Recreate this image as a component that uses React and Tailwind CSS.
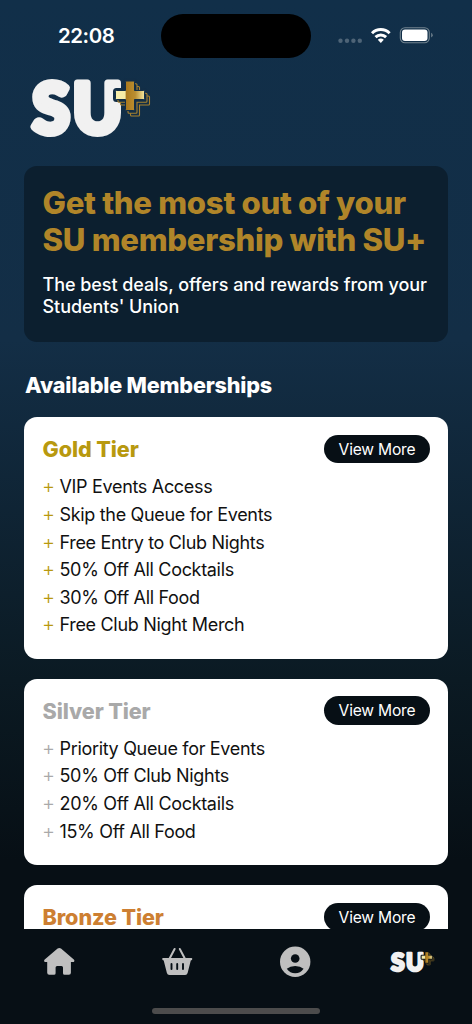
import React from "react";

const tiers = [
  {
    name: "Gold Tier",
    color: "text-[#b8990f]",
    perks: [
      "VIP Events Access",
      "Skip the Queue for Events",
      "Free Entry to Club Nights",
      "50% Off All Cocktails",
      "30% Off All Food",
      "Free Club Night Merch",
    ],
  },
  {
    name: "Silver Tier",
    color: "text-[#a9a9a9]",
    perks: ["Priority Queue for Events", "50% Off Club Nights", "20% Off All Cocktails", "15% Off All Food"],
  },
  {
    name: "Bronze Tier",
    color: "text-[#cd7f32]",
    perks: [],
  },
];

const PLUS = "M126.500 81h7q1 0 1 1v8.500h9q1 0 1 1v7q0 1-1 1h-9v10q0 1-1 1h-7q-1 0-1-1v-10h-9q-1 0-1-1v-7q0-1 1-1h9v-8.500q0-1 1-1z";

function Logo({ className, halo, id }) {
  return (
    <svg className={className + " overflow-visible"} viewBox="30 78 122 60">
      <defs>
        <linearGradient id={id} x1="0" x2="1" y1="0" y2="0">
          <stop offset="0" stopColor="#f8efac" />
          <stop offset="0.33" stopColor="#f5eba6" />
          <stop offset="0.37" stopColor="#a9791f" />
          <stop offset="0.6" stopColor="#b88a2b" />
          <stop offset="0.68" stopColor="#b98e31" />
          <stop offset="1" stopColor="#f6e9a0" />
        </linearGradient>
      </defs>
      <g
        fill="#f1f1f1"
        stroke="#f1f1f1"
        strokeWidth="7"
        strokeLinejoin="round"
        fontFamily="Lato, sans-serif"
        fontWeight="900"
        fontSize="68"
      >
        <text x="32.500" y="133" textLength="37" lengthAdjust="spacingAndGlyphs">S</text>
        <text x="73" y="133" textLength="49" lengthAdjust="spacingAndGlyphs">U</text>
      </g>
      <path d={PLUS} fill={halo} stroke={halo} strokeWidth="5" strokeLinejoin="round" />
      <g fill={halo} stroke="#a8822f" strokeWidth="1.100">
        <path d={PLUS} transform="translate(5 5.500)" />
        <path d={PLUS} transform="translate(2.500 2.800)" />
      </g>
      <path d={PLUS} fill={"url(#" + id + ")"} stroke={halo} strokeWidth="1" />
    </svg>
  );
}

function StatusBar() {
  return (
    <div className="flex h-[72px] shrink-0 items-start">
      <div className="w-[161px] pt-[23px] pl-[58px] text-[20.400px] leading-[25px] font-semibold tracking-[-0.400px] text-white">
        22:08
      </div>
      <div className="mt-[14px] h-[44px] w-[150px] rounded-full bg-black" />
      <svg className="mt-[20px] ml-[25px]" width="100" height="32" viewBox="336 20 100 32">
        <g fill="#4e6477">
          <circle cx="340.500" cy="40.800" r="2.200" />
          <circle cx="347" cy="40.800" r="2.200" />
          <circle cx="353.400" cy="40.800" r="2.200" />
          <circle cx="359.800" cy="40.800" r="2.200" />
        </g>
        <g fill="none" stroke="#fff" strokeWidth="3">
          <path d="M372 33.200a12.600 12.600 0 0 1 17.600 0" />
          <path d="M375.500 37.200a7.700 7.700 0 0 1 10.600 0" />
        </g>
        <path d="M377.800 39.700a4.600 4.600 0 0 1 6 0l-3 3.200z" fill="#fff" />
        <rect x="400.300" y="27.700" width="29" height="15" rx="4.700" fill="none" stroke="#71838f" strokeWidth="1.100" />
        <rect x="402" y="29.600" width="25.500" height="11.400" rx="3" fill="#fff" />
        <path d="M431.200 32.800v4.800q1.500-.9 1.500-2.400t-1.500-2.400z" fill="#71838f" />
      </svg>
    </div>
  );
}

function TierCard({ tier }) {
  return (
    <section className="shrink-0 rounded-[13px] bg-white px-[18px] pt-[18px] pb-[20.400px]">
      <div className="mb-[10px] flex h-[28px] items-center justify-between">
        <h3
          className={
            "pl-[0.500px] text-[21.600px] leading-[28px] font-extrabold tracking-[-0.100px] whitespace-nowrap " + tier.color
          }
        >
          {tier.name}
        </h3>
        <button className="h-[28.500px] w-[106px] rounded-full bg-[#070f15] pt-[1px] text-[15.600px] leading-[28px] tracking-[-0.200px] whitespace-nowrap text-white">
          View More
        </button>
      </div>
      <ul>
        {tier.perks.map((perk) => (
          <li key={perk} className="flex h-[27.650px] items-center pt-[0.500px] text-[18px] leading-[27.650px] text-[#111]">
            <span className={"w-[17.500px] shrink-0 text-[20px] font-light tracking-[-1px] " + tier.color}>+</span>
            <span className="tracking-[-0.320px] whitespace-nowrap">{perk}</span>
          </li>
        ))}
      </ul>
      {tier.perks.length === 0 && <div className="h-[110px]" />}
    </section>
  );
}

export default function App() {
  return (
    <div className="flex h-[1024px] w-[472px] flex-col overflow-hidden bg-[linear-gradient(180deg,#112f49_0px,#132e46_340px,#0b1a23_680px,#070f15_860px)] font-['Inter',sans-serif]">
      <StatusBar />
      <main className="flex h-[857px] shrink-0 flex-col overflow-hidden px-[24px]">
        <Logo id="logo-main" halo="#122e47" className="mt-[6px] ml-[6px] h-[60px] w-[122px] shrink-0" />
        <section className="mt-[28px] h-[176px] shrink-0 rounded-[13px] bg-[#0c1f2f] px-[18.500px] pt-[19px]">
          <h1 className="text-[31.200px] leading-[37.200px] font-extrabold tracking-[-0.320px] whitespace-nowrap text-[#b08529]">
            Get the most out of your
            <br />
            SU membership with SU+
          </h1>
          <p className="mt-[14.600px] text-[18px] leading-[22px] font-medium tracking-[-0.060px] whitespace-nowrap text-white">
            The best deals, offers and rewards from your
            <br />
            Students' Union
          </p>
        </section>
        <h2 className="mt-[29px] mb-[18px] shrink-0 pl-[1px] text-[21.600px] leading-[28px] font-extrabold tracking-[-0.190px] whitespace-nowrap text-white">
          Available Memberships
        </h2>
        <div className="flex flex-col gap-[19.300px]">
          {tiers.map((tier) => (
            <TierCard key={tier.name} tier={tier} />
          ))}
        </div>
      </main>
      <nav className="flex h-[95px] shrink-0 flex-col items-center bg-[#070f15]">
        <div className="grid h-[66px] w-full grid-cols-4 place-items-center">
          <svg width="32" height="32" viewBox="43 946 32 32" fill="#bfbfbf">
            <path d="M57.600 948.600q1.700-1.400 3.400 0l12.800 10.800q.9.800.5 1.800-.3.900-1.500.9h-1.900v10.700q0 2-2 2h-4.300q-1.600 0-1.600-1.600v-5.600q0-1.500-1.500-1.500h-4.400q-1.500 0-1.500 1.500v5.600q0 1.600-1.600 1.600h-4.800q-2 0-2-2v-10.700h-1.500q-1.200 0-1.500-.9-.4-1 .5-1.800z" />
          </svg>
          <svg width="32" height="32" viewBox="161 946 32 32">
            <path d="M174.600 949l-5 9.500M179.800 949l5 9.500" stroke="#bfbfbf" strokeWidth="2" strokeLinecap="round" />
            <path d="M163 958h28.400q.9 0 .9 1 0 1.200-1.500 1.400l-3.200 12.500q-.5 2-2.500 2h-15.700q-2 0-2.500-2l-3.200-12.500q-1.500-.2-1.500-1.400 0-1 .8-1z" fill="#bfbfbf" />
            <path d="M171.500 964v5M177.200 964v5M183 964v5" stroke="#070f15" strokeWidth="1.900" strokeLinecap="round" />
          </svg>
          <svg width="32" height="32" viewBox="279 945.500 32 32">
            <circle cx="295.200" cy="961.300" r="15.200" fill="#bfbfbf" />
            <circle cx="295.200" cy="958" r="4.300" fill="#070f15" />
            <path d="M286.800 968.300q3.200-2.700 8.400-2.700t8.400 2.700q-3.200 4.500-8.400 4.500t-8.400-4.500z" fill="#070f15" />
          </svg>
          <Logo id="logo-tab" halo="#070f15" className="mr-[1px] h-[22px] w-[45px]" />
        </div>
        <div className="mt-[13px] h-[6px] w-[168px] rounded-full bg-[#4c4c4c]" />
      </nav>
    </div>
  );
}
